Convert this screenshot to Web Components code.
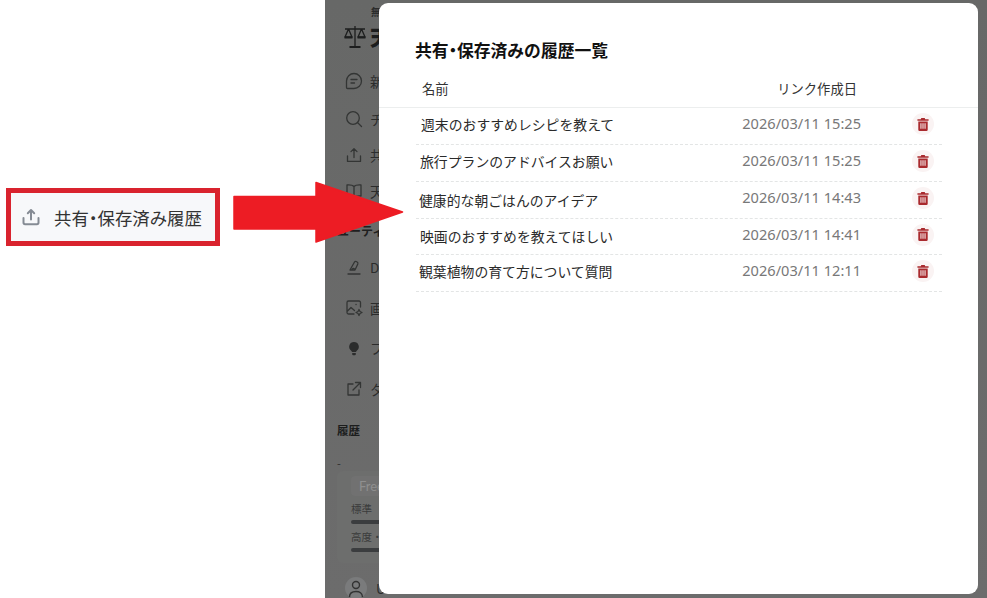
<!DOCTYPE html>
<html lang="ja"><head><meta charset="utf-8"><title>履歴</title>
<style>
html,body{margin:0;padding:0;background:#fff}
body{font-family:"Noto Sans CJK JP","Noto Sans",sans-serif}
</style></head><body>
<app-shell>
  <share-callout slot="left">共有<span style="font-feature-settings:'palt'">・</span>保存済み履歴</share-callout>
  <dim-sidebar slot="main"></dim-sidebar>
  <history-modal slot="main" heading="共有・保存済みの履歴一覧">
    <history-row name="週末のおすすめレシピを教えて" date="2026/03/11 15:25" nudge="5" lift="4"></history-row>
    <history-row name="旅行プランのアドバイスお願い" date="2026/03/11 15:25" nudge="4" lift="4"></history-row>
    <history-row name="健康的な朝ごはんのアイデア" date="2026/03/11 14:43" nudge="3" lift="1"></history-row>
    <history-row name="映画のおすすめを教えてほしい" date="2026/03/11 14:41" nudge="4" lift="2" h="36"></history-row>
    <history-row name="観葉植物の育て方について質問" date="2026/03/11 12:11" nudge="3" lift="4"></history-row>
  </history-modal>
  <red-arrow slot="over"></red-arrow>
</app-shell>
<script>
const def=(name,html,init)=>customElements.define(name,class extends HTMLElement{
  connectedCallback(){ if(this.shadowRoot) return; const r=this.attachShadow({mode:'open'}); r.innerHTML=html; init&&init(this,r); }
});
const FONT='"Noto Sans CJK JP","Noto Sans",sans-serif';
const upload=(s,c,w)=>`<svg width="${s}" height="${s}" viewBox="0 0 18 18" fill="none" stroke="${c}" stroke-width="${w}" stroke-linecap="round" stroke-linejoin="round"><path d="M9 11.500V2.200M5.800 5.200 9 2l3.200 3.200M1.500 10v4.600a1.600 1.600 0 0 0 1.600 1.600h11.800a1.600 1.600 0 0 0 1.600-1.600V10"/></svg>`;

def('app-shell',`<style>
:host{display:flex;position:relative;width:987px;height:598px;overflow:hidden;background:#fff}
.left{flex:0 0 325px}
.main{flex:1;position:relative;overflow:hidden;background:linear-gradient(#676867,#6c6c6c)}
</style><div class="left"><slot name="left"></slot></div><div class="main"><slot name="main"></slot></div><slot name="over"></slot>`);

def('share-callout',`<style>
:host{display:flex;align-items:center;box-sizing:border-box;width:214px;height:58px;margin:188px 0 0 6px;
border:5px solid #d9232e;background:#f7f8fa;padding-left:11px;gap:14px;color:#333;font:17.400px ${FONT};white-space:nowrap}
svg{flex:none}
</style>${upload(18,'#858b94',2)}<span><slot></slot></span>`);

def('red-arrow',`<style>
:host{display:block;position:absolute;left:233px;top:181px;width:171px;height:62px;line-height:0}
</style><svg width="171" height="62" viewBox="0 0 171 62"><path fill="#ed1c24" stroke="#ed1c24" stroke-width="1.500" stroke-linejoin="round" d="M1 15.500H83V1.500L169.500 31 83 61V48H1Z"/></svg>`);

const ink='#2b2c2c';
const ic={
 chat:`<path d="M9 1.500a7.500 7.500 0 0 1 0 15H2.500a1 1 0 0 1-1-1V9A7.500 7.500 0 0 1 9 1.500ZM6 7.500h6M6 11h3.500"/>`,
 search:`<circle cx="8" cy="8" r="6.300"/><path d="m13 13 3.500 3.500"/>`,
 up:`<path d="M9 11.500V3M6 5.600 9 2.600l3 3M2.500 10v5.400h13V10"/>`,
 book:`<path d="M9 4.500C7.500 3 5 2.800 2 3v11c3-.2 5.500 0 7 1.400 1.500-1.400 4-1.600 7-1.400V3c-3-.2-5.500 0-7 1.500ZM9 4.500v10.900"/>`,
 pen:`<path d="M5 12 9.500 4c1-1.500 4 .2 3.300 2L10 12ZM7 12c.5-2 2-2.500 3 0M3 16h12"/>`,
 img:`<path d="M15.500 8V3.500A1.500 1.500 0 0 0 14 2H3.500A1.500 1.500 0 0 0 2 3.500v10A1.500 1.500 0 0 0 3.500 15H9M2.500 12l3.500-3.500 3.500 3M11 5.500h.1M14 10.500l1 2 2 1-2 1-1 2-1-2-2-1 2-1Z"/>`,
 bulb:`<path fill="#2b2c2c" stroke="none" d="M9 3a4.800 4.800 0 0 0-2.800 8.700c.5.400.8 1 .8 1.300h4c0-.3.3-.9.800-1.300A4.800 4.800 0 0 0 9 3ZM7.200 14h3.600v1.200a1 1 0 0 1-1 1H8.200a1 1 0 0 1-1-1Z"/>`,
 ext:`<path d="M8 4H3v11h11v-5M10.500 2.500h5v5M15.500 2.500 8 10"/>`
};
const svg=k=>`<svg width="18" height="18" viewBox="0 0 18 18" fill="none" stroke="#333534" stroke-width="1.300" stroke-linecap="round" stroke-linejoin="round">${ic[k]}</svg>`;
const row=(k,t,h,mt=0)=>`<div class="row" style="height:${h}px;margin-top:${mt}px">${svg(k)}<span>${t}</span></div>`;
def('dim-sidebar',`<style>
:host{display:block;box-sizing:border-box;width:100%;height:598px;padding:5px 0 0 20px;color:${ink};font:13.500px ${FONT};white-space:nowrap;overflow:hidden}
.tag{font-size:10px;font-weight:700;line-height:14px;margin-left:26px}
.logo{display:flex;align-items:center;gap:3px;height:28px;margin:3px 0 12px -2px}
.logo b{font-size:21px;line-height:28px;font-weight:900;color:#1c1d1d}
.row{display:flex;align-items:center;gap:7px}
.sec{font-weight:700;font-size:11.500px;height:20px;line-height:20px;margin:8px 0 0 -8px;color:#1c1d1d}
.util{font-weight:700;font-size:12px;height:22px;line-height:22px;margin:10px 0 0 -8px;color:#1f2020}
.dash{font-size:11px;height:14px;line-height:14px;margin:16px 0 0 -8px}
.card{box-sizing:border-box;margin:1px 0 0 -8px;height:92px;width:300px;padding:5px 0 0 14px;font-size:10.500px;color:#3a3b3b;background:#6d6e6d;border-radius:6px}
.chip{display:inline-block;font:13px Lato,sans-serif;color:#8f8f8f;background:#717171;padding:2px 8px;border-radius:4px;height:16px;line-height:16px}
.lab{height:14px;line-height:14px;margin-top:6px}
.bar{height:4px;background:#3b3d3f;border-radius:2px;margin-top:4px;width:260px}
.bar+.lab{margin-top:6px}
.user{display:flex;align-items:center;gap:9px;margin-top:14px}
.av{width:22px;height:22px;border-radius:50%;background:#7a7b7c;display:flex;align-items:center;justify-content:center}
</style>
<div class="tag">無</div>
<div class="logo"><svg width="24" height="25" viewBox="0 0 24 25" fill="none" stroke="#1d1e1e" stroke-width="1.300" stroke-linejoin="round"><path d="M12 2v20M2 5h20M5.500 5 2 13h7ZM18.500 5 15 13h7Z"/><path d="M1.500 13.500h8M14.500 13.500h8M6.500 23h11" stroke-width="2"/></svg><b>天</b></div>
${row('chat','新',38)}
${row('search','チ',38)}
${row('up','共',34)}
${row('book','天',38)}
<div class="util">ユーティ</div>
${row('pen','D',38,6)}
${row('img','画',44)}
${row('bulb','フ',36)}
${row('ext','タ',46)}
<div class="sec">履歴</div>
<div class="dash">-</div>
<div class="card"><span class="chip">Free</span>
<div class="lab">標準</div><div class="bar"></div>
<div class="lab">高度・</div><div class="bar"></div></div>
<div class="user"><span class="av"><svg width="16" height="18" viewBox="0 0 16 18" fill="none" stroke="#333" stroke-width="1.400"><circle cx="8" cy="6" r="3.500"/><path d="M1.500 18c0-4 3-5.500 6.500-5.500s6.500 1.500 6.500 5.500"/></svg></span><span>U</span></div>`);

def('history-modal',`<style>
:host{display:block;position:absolute;left:54px;top:3px;box-sizing:border-box;width:599px;height:591px;background:#fff;border-radius:9px;
padding:35px 0 0;color:#222;font-family:${FONT}}
h2{margin:0 0 0 36px;font-size:16.800px;font-weight:700;line-height:24px;color:#111;white-space:nowrap}
h2 i{font-style:normal;font-feature-settings:"palt"}
.head{display:flex;align-items:center;height:37px;margin-top:8px;padding:0 0 0 43px;font-size:13.300px;color:#333;border-bottom:1.500px solid #eceeee}
.head .n{flex:1}
.head .d{margin-right:121px;white-space:nowrap}
.rows{margin:0 36px 0 37px}
</style>
<h2 id="t"></h2>
<div class="head"><span class="n">名前</span><span class="d">リンク作成日</span></div>
<div class="rows"><slot></slot></div>`,(el,r)=>{
  const [a,b]=el.getAttribute('heading').split('・');
  r.getElementById('t').innerHTML=a+'<i>・</i>'+b;
});

def('history-row',`<style>
:host{display:flex;align-items:center;box-sizing:border-box;height:37px;border-bottom:1px dashed #e3e5e5;white-space:nowrap}
.n{flex:1;font-size:13.850px;color:#2a2a2a}
.d{font:14.600px "Noto Sans",sans-serif;color:#787878;margin-right:51px;position:relative;top:-3px}
.b{flex:none;width:22px;height:22px;margin:-4px 8px 0 0;border-radius:50%;background:#faf3f3;display:flex;align-items:center;justify-content:center}
</style>
<span class="n" id="n"></span><span class="d" id="d"></span>
<span class="b"><svg width="12" height="13" viewBox="0 0 14 15"><path fill="#a92a2e" d="M5 0h4l.6 1.300H13.500v1.700H.5V1.300H4.400ZM1.500 4h11v9.500A1.500 1.500 0 0 1 11 15H3a1.500 1.500 0 0 1-1.500-1.500ZM4 6v6.500h1.200V6Zm2.400 0v6.500h1.200V6ZM8.800 6v6.500H10V6Z"/></svg></span>`,(el,r)=>{
  const n=r.getElementById('n');n.textContent=el.getAttribute('name');
  n.style.paddingLeft=el.getAttribute('nudge')+'px';
  n.style.paddingBottom=el.getAttribute('lift')+'px';
  if(el.hasAttribute('h')) el.style.height=el.getAttribute('h')+'px';
  r.getElementById('d').textContent=el.getAttribute('date');
});
</script></body></html>
